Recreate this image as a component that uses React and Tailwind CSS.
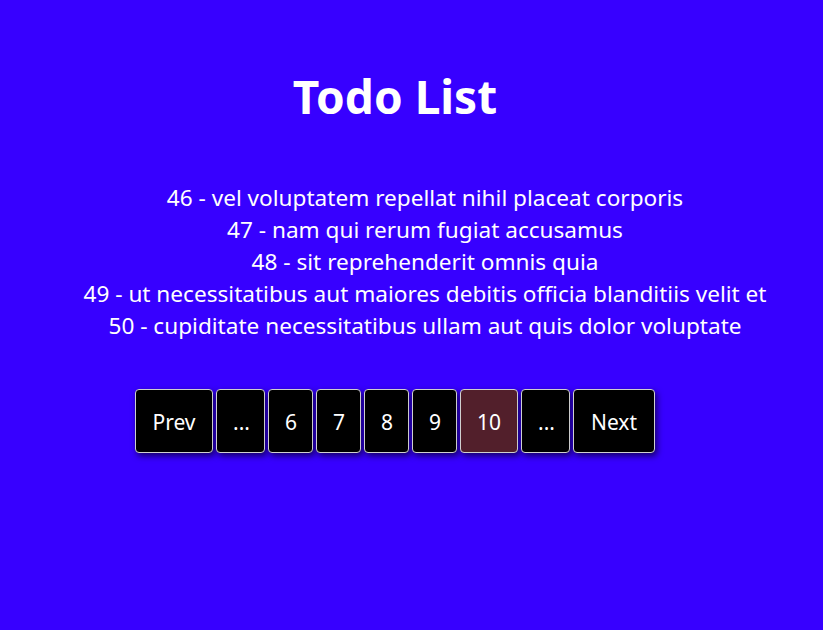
const todos = [
  { id: 46, title: 'vel voluptatem repellat nihil placeat corporis' },
  { id: 47, title: 'nam qui rerum fugiat accusamus' },
  { id: 48, title: 'sit reprehenderit omnis quia' },
  { id: 49, title: 'ut necessitatibus aut maiores debitis officia blanditiis velit et' },
  { id: 50, title: 'cupiditate necessitatibus ullam aut quis dolor voluptate' },
];

const pages = ['Prev', '...', '6', '7', '8', '9', '10', '...', 'Next'];

export default function App() {
  return (
    <div className="min-h-[630px] bg-[#3700ff] text-white font-['Segoe_UI','Noto_Sans',sans-serif]">
      <div className="w-[790px]">
        <h1 className="pt-[65px] text-center text-[46px] leading-[62px] font-bold">Todo List</h1>

        <ul className="mt-[55px] pl-[60px] text-center text-[22.6px] leading-[32px]">
          {todos.map((t) => (
            <li key={t.id}>
              {t.id} - {t.title}
            </li>
          ))}
        </ul>

        <div className="mt-[47px] flex justify-center gap-[3px]">
          {pages.map((p, i) => (
            <button
              key={i}
              type="button"
              className={`h-[64px] px-4 pt-[3px] rounded-[4px] border border-[#d0d0d0] text-[21px] shadow-[2px_3px_6px_rgba(0,0,0,0.6)] ${
                p === '10' ? 'bg-[#521f2b] w-[58px]' : 'bg-black'
              } ${p === 'Prev' ? 'w-[78px]' : ''} ${p === 'Next' ? 'w-[82px]' : ''} ${p === '...' ? 'w-[49px]' : ''} ${
                ['6', '7', '8', '9'].includes(p) ? 'w-[45px]' : ''
              }`}
            >
              {p}
            </button>
          ))}
        </div>
      </div>
    </div>
  );
}
